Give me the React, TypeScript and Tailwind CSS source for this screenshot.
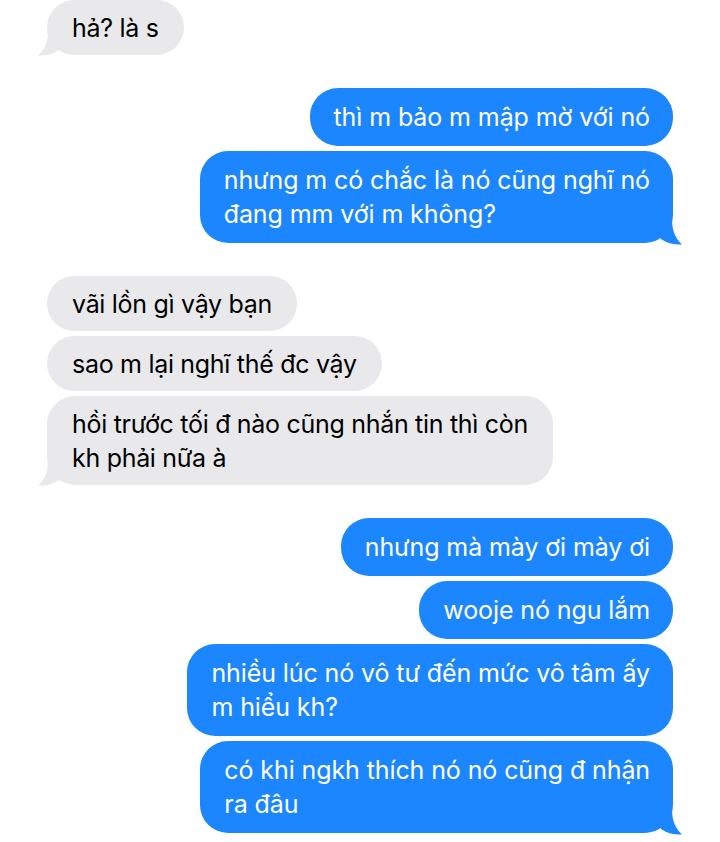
import React from 'react';

type Msg = { lines: string[] };
type Group = { fromMe: boolean; msgs: Msg[] };

const groups: Group[] = [
  { fromMe: false, msgs: [{ lines: ['hả? là s'] }] },
  {
    fromMe: true,
    msgs: [
      { lines: ['thì m bảo m mập mờ với nó'] },
      { lines: ['nhưng m có chắc là nó cũng nghĩ nó', 'đang mm với m không?'] },
    ],
  },
  {
    fromMe: false,
    msgs: [
      { lines: ['vãi lồn gì vậy bạn'] },
      { lines: ['sao m lại nghĩ thế đc vậy'] },
      { lines: ['hồi trước tối đ nào cũng nhắn tin thì còn', 'kh phải nữa à'] },
    ],
  },
  {
    fromMe: true,
    msgs: [
      { lines: ['nhưng mà mày ơi mày ơi'] },
      { lines: ['wooje nó ngu lắm'] },
      { lines: ['nhiều lúc nó vô tư đến mức vô tâm ấy', 'm hiểu kh?'] },
      { lines: ['có khi ngkh thích nó nó cũng đ nhận', 'ra đâu'] },
    ],
  },
];

const Tail: React.FC<{ fromMe: boolean }> = ({ fromMe }) =>
  fromMe ? (
    <svg className="absolute -right-[10px] -bottom-[2px]" width="22" height="26" viewBox="0 0 22 26">
      <path d="M0 0 H11 C11 11 14 19 21 25.5 C13 26 6 24 0 20 Z" fill="#1b86fd" />
    </svg>
  ) : (
    <svg className="absolute -left-[10px] -bottom-[1px]" width="22" height="25" viewBox="0 0 22 25">
      <path d="M22 0 H11 C11 11 8 18 1 24.5 C9 25 16 23 22 19 Z" fill="#e9e9eb" />
    </svg>
  );

const Bubble: React.FC<{ msg: Msg; fromMe: boolean; last: boolean }> = ({ msg, fromMe, last }) => (
  <div
    className={`relative w-fit rounded-[28px] text-[25px] leading-[34px] whitespace-nowrap ${
      fromMe
        ? 'bg-[#1b86fd] text-white tracking-[-0.1px] py-3 pl-6 pr-[23px]'
        : 'bg-[#e9e9eb] text-black tracking-[-0.3px] pt-[11px] pb-[10px] pl-[25px] pr-[25px]'
    }`}
  >
    {msg.lines.map((l, i) => (
      <div key={i}>{l}</div>
    ))}
    {last && <Tail fromMe={fromMe} />}
  </div>
);

export default function App() {
  return (
    <div className="w-[720px] h-[842px] overflow-hidden bg-white" style={{ fontFamily: 'Inter, "Noto Sans", sans-serif' }}>
      <div className="flex flex-col gap-[33px] pl-[47px] pr-[47px]">
        {groups.map((g, gi) => (
          <div key={gi} className={`flex flex-col gap-[5px] ${g.fromMe ? 'items-end' : 'items-start'}`}>
            {g.msgs.map((m, mi) => (
              <Bubble key={mi} msg={m} fromMe={g.fromMe} last={mi === g.msgs.length - 1} />
            ))}
          </div>
        ))}
      </div>
    </div>
  );
}
